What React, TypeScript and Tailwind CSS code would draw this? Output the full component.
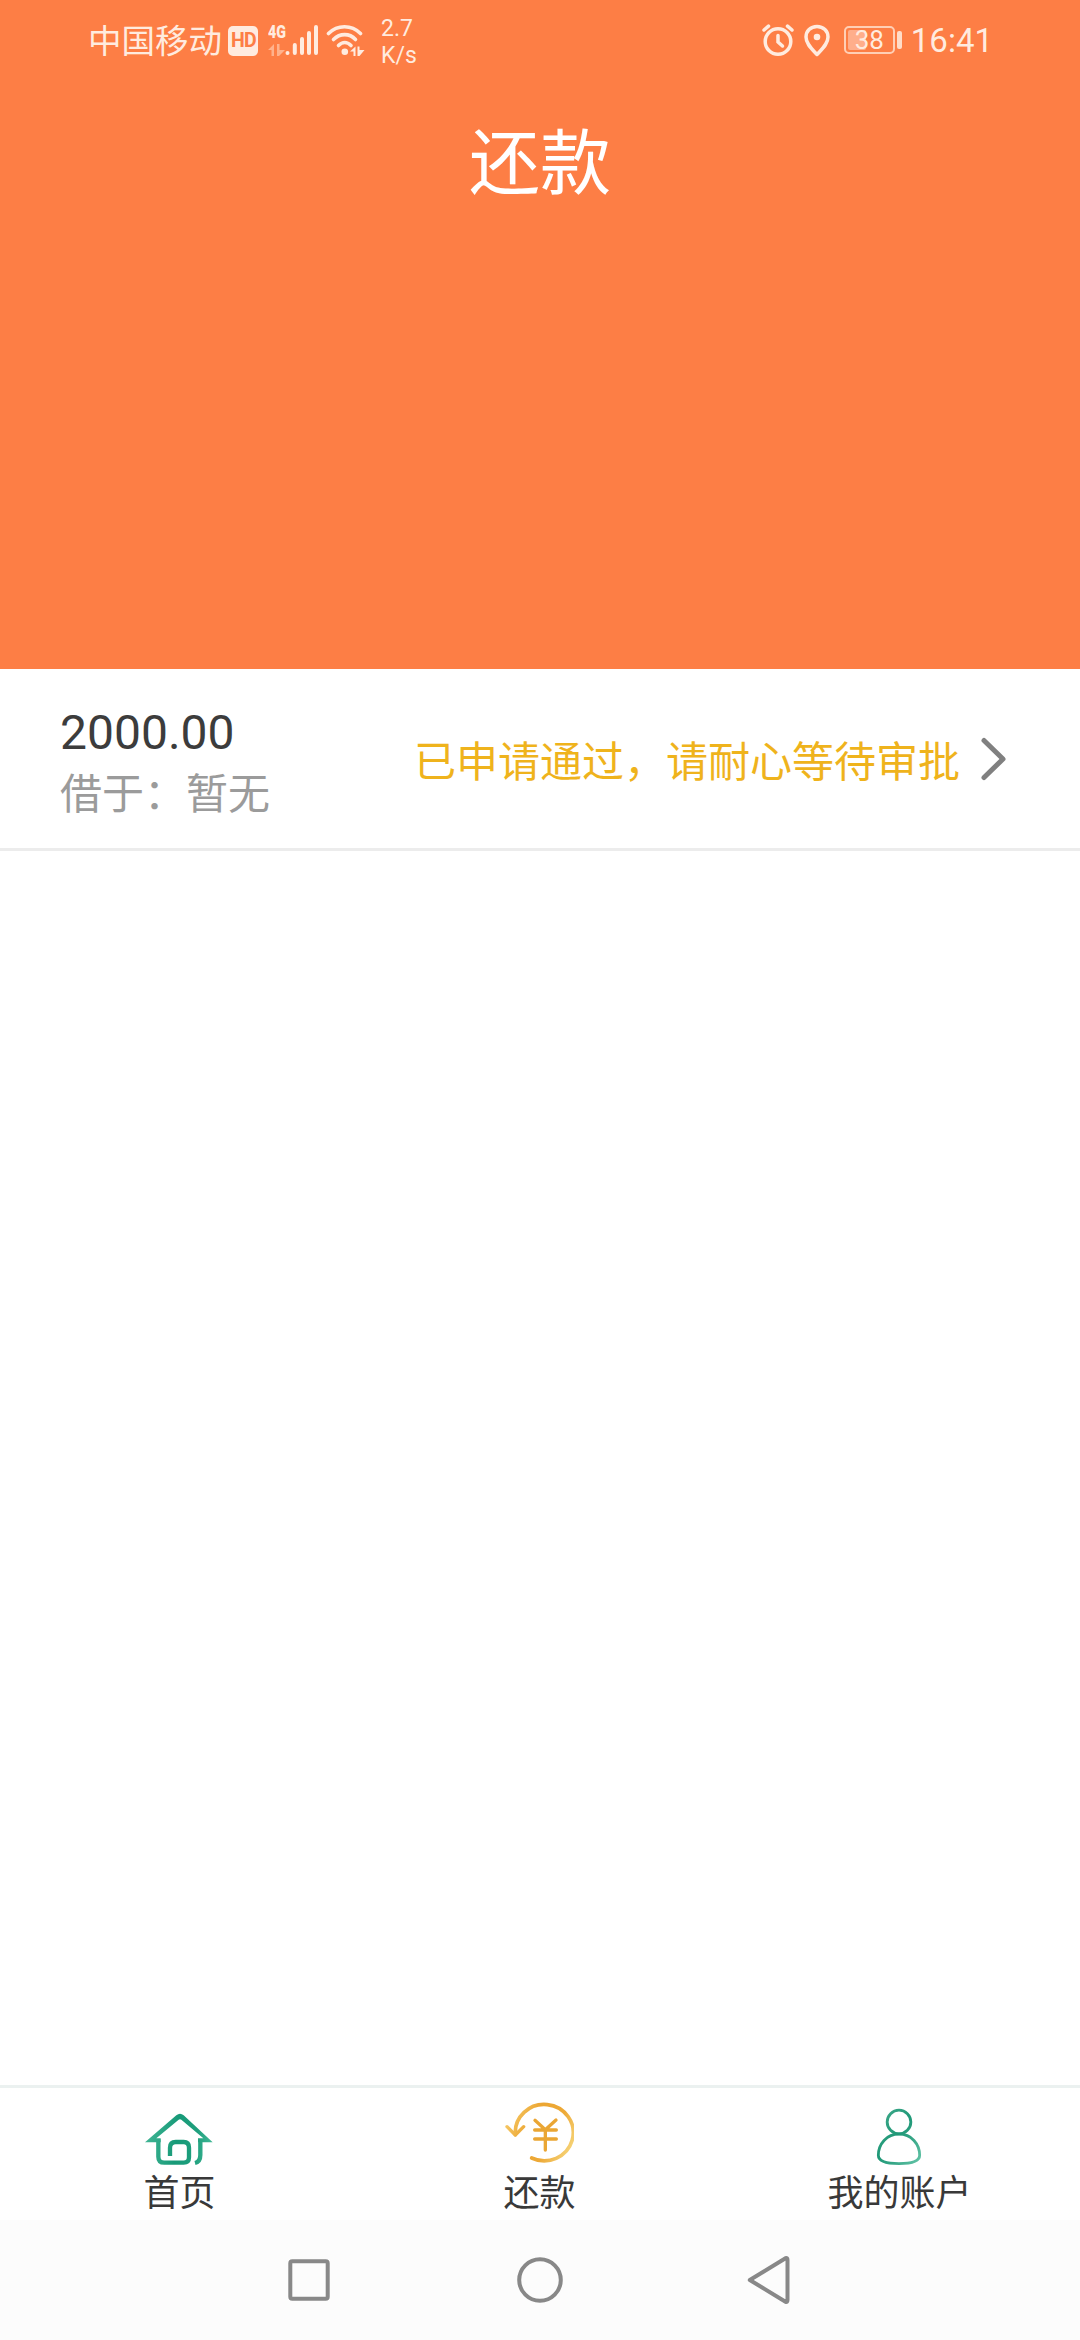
import React from 'react';

const StatusBar: React.FC = () => {
  return (
    <div className="flex h-[80px] items-start text-[#ffebdf]">
      <span className="ml-[88px] mt-[18px] w-[133px] whitespace-nowrap text-[33.5px] leading-[48px]">中国移动</span>
      <span className="ml-[7px] mt-[26px] flex h-[30px] w-[30px] items-center justify-center rounded-[5px] bg-[#ffebdf] pl-px text-[19.5px] font-bold leading-none tracking-[-0.8px] text-[#fd7e45]">
        HD
      </span>
      <div className="ml-[10px] mt-[24px] flex w-[17px] flex-col">
        <span className="origin-left scale-x-75 text-[19px] font-black leading-[15px]">4G</span>
        <svg className="mt-[5px]" width="17" height="12" viewBox="0 0 17 12" fill="#ffb28c">
          <path d="M0 6 6 0v12H3.500V6zM9 0h2.500v6H17l-6 6H9z" />
        </svg>
      </div>
      <svg className="mt-[24px]" width="34" height="32" viewBox="0 0 34 32" stroke="#ffebdf" strokeWidth="4" strokeLinecap="round">
        <path d="M2.500 29h.01M9.800 21v8M17 15v14M24 9v20M31 3v26" />
      </svg>
      <svg className="ml-[7px] mt-[24px]" width="40" height="32" viewBox="0 0 40 32" fill="none" stroke="#ffebdf" strokeLinecap="round">
        <path d="M2.500 9.500C11.500 .5 25.500 .5 34.500 9.500" strokeWidth="3.600" />
        <path d="M7.500 15.500C14 9 23.500 9 29.500 15.500" strokeWidth="3.600" />
        <path d="M12.500 21.500C16.500 17.500 21 17.500 25 21.500" strokeWidth="3.600" />
        <circle cx="18.800" cy="27.800" r="3.300" fill="#ffebdf" stroke="none" />
        <path d="M24 27.500 29.500 22.500v9.500h-2v-4.500zM31.500 22.500h2V26h5l-5 6h-2z" fill="#ffebdf" stroke="none" />
      </svg>
      <div className="ml-[15px] mt-[15px] flex flex-col text-[23px] leading-[27px]">
        <span>2.7</span>
        <span>K/s</span>
      </div>
      <svg className="ml-auto mt-[23px]" width="34" height="34" viewBox="0 0 34 34" fill="none" stroke="#ffebdf" strokeLinecap="round">
        <circle cx="17" cy="18.500" r="12.800" strokeWidth="3.500" />
        <path d="M17 12.500v6.500l4.500 4" strokeWidth="3.500" />
        <path d="M3 7 7.500 3.200M31 7l-4.500-3.800" strokeWidth="3.500" />
      </svg>
      <svg className="ml-[7px] mt-[24px]" width="32" height="33" viewBox="0 0 32 33" fill="none">
        <path d="M15 2.500c-6.500 0-11 4.800-11 10.500 0 7 6 12 11 17.500 5-5.500 11-10.500 11-17.500C26 7.300 21.500 2.500 15 2.500z" stroke="#ffebdf" strokeWidth="3.500" strokeLinejoin="round" />
        <circle cx="15" cy="13" r="3.300" fill="#ffebdf" />
      </svg>
      <div className="ml-[10px] mt-[26px] flex items-center">
        <div className="relative flex h-[28px] w-[51px] items-center justify-center rounded-[5px] border-2 border-[#ffcfb5]">
          <div className="absolute left-[2px] top-[2px] h-[20px] w-[18px] rounded-[2px] bg-[#ffae8b]" />
          <span className="relative text-[26px] leading-none">38</span>
        </div>
        <div className="ml-[2px] h-[18px] w-[5px] rounded-[2px] bg-[#ffdcc8]" />
      </div>
      <span className="ml-[9px] mr-[87px] mt-[21px] text-[33px] leading-[40px]">16:41</span>
    </div>
  );
};

const HomeIcon: React.FC = () => (
  <svg width="120" height="73" viewBox="0 81 360 219" fill="none">
    <defs>
      <linearGradient id="home" gradientUnits="userSpaceOnUse" x1="80" y1="200" x2="278" y2="220">
        <stop offset="0" stopColor="#3fb493" />
        <stop offset=".45" stopColor="#179a78" />
        <stop offset=".75" stopColor="#1f9f7d" />
        <stop offset="1" stopColor="#42b997" />
      </linearGradient>
    </defs>
    <path d="M75 217 169 136Q180 127 191 136L278 217H234V205H250L184 149Q180 146 176 149L109 205H122V217Z" fill="url(#home)" />
    <path
      d="M115 208V260Q115 278 133 278H191Q207 278 207 262V233Q207 216 191 216H167Q150 216 150 233V258M241 208V255Q241 275 225 279"
      stroke="url(#home)"
      strokeWidth="13"
    />
  </svg>
);

const RepayIcon: React.FC = () => (
  <svg width="120" height="73" viewBox="0 81 360 219" fill="none" strokeLinecap="round" strokeLinejoin="round">
    <defs>
      <linearGradient id="repay" gradientUnits="userSpaceOnUse" x1="75" y1="130" x2="290" y2="240">
        <stop offset="0" stopColor="#f7cf70" />
        <stop offset=".35" stopColor="#eca632" />
        <stop offset=".65" stopColor="#eda937" />
        <stop offset="1" stopColor="#f8dc84" />
      </linearGradient>
      <clipPath id="repayClip">
        <path d="M60 81H282V300H60z" />
      </clipPath>
    </defs>
    <g clipPath="url(#repayClip)">
      <path d="M106 194A87 84.500 0 1 1 155 264" stroke="url(#repay)" strokeWidth="11" />
    </g>
    <path d="M81 170 106 195 131 170" stroke="url(#repay)" strokeWidth="10" />
    <path d="M165 151 196 179 228 150M164 180H229M164 207H229M196 180V240" stroke="#eaa634" strokeWidth="10" />
  </svg>
);

const AccountIcon: React.FC = () => (
  <svg width="180" height="73" viewBox="0 81 540 219" fill="none">
    <defs>
      <linearGradient id="account" gradientUnits="userSpaceOnUse" x1="200" y1="160" x2="335" y2="270">
        <stop offset="0" stopColor="#3aa687" />
        <stop offset=".4" stopColor="#1f9877" />
        <stop offset=".65" stopColor="#37a687" />
        <stop offset="1" stopColor="#62c3a6" />
      </linearGradient>
    </defs>
    <circle cx="267" cy="156" r="35.500" stroke="url(#account)" strokeWidth="8.500" />
    <path
      d="M267 192C230 192 205 222 205 256C205 274 232 281 267 281S329 274 329 256C329 222 304 192 267 192Z"
      stroke="url(#account)"
      strokeWidth="8.500"
    />
  </svg>
);

const tabs = [
  { label: '首页', icon: <HomeIcon /> },
  { label: '还款', icon: <RepayIcon /> },
  { label: '我的账户', icon: <AccountIcon /> },
];

const App: React.FC = () => {
  return (
    <div className="flex h-[2340px] w-[1080px] flex-col overflow-hidden bg-white font-[Roboto,'Noto_Sans_CJK_SC',sans-serif]">
      <header className="h-[669px] bg-[#fd7e45]">
        <StatusBar />
        <h1 className="mt-[32px] text-center text-[71px] leading-[104px] text-white">还款</h1>
      </header>

      <main className="flex-1">
        <div className="flex h-[182px] items-center border-b-[3px] border-[#ececec] pl-[60px] pr-[72px]">
          <div className="flex flex-col pt-3">
            <span className="text-[48px] leading-[60px] text-[#3c3c3c]">2000.00</span>
            <span className="text-[42px] leading-[64px] text-[#9b9b9b]">借于：暂无</span>
          </div>
          <span className="ml-auto pt-[9px] text-[42px] leading-[60px] text-[#efb31c]">已申请通过，请耐心等待审批</span>
          <svg className="ml-[18px]" width="30" height="46" viewBox="0 0 30 46" fill="none" stroke="#808080" strokeWidth="5" strokeLinecap="round" strokeLinejoin="round">
            <path d="M6 4.500 25 23 6 41.500" />
          </svg>
        </div>
      </main>

      <nav className="grid h-[135px] grid-cols-3 border-t-[3px] border-[#ebf1f0]">
        {tabs.map((tab) => (
          <div key={tab.label} className="flex flex-col items-center pt-[9px]">
            {tab.icon}
            <span className="mt-0.5 mr-px text-[36px] leading-[44px] text-[#393939]">{tab.label}</span>
          </div>
        ))}
      </nav>

      <div className="flex h-[120px] items-center justify-center gap-[183px] bg-[#fcfcfc]">
        <svg width="48" height="48" viewBox="0 0 48 48" fill="none" stroke="#888" strokeWidth="4">
          <rect x="5.300" y="5.300" width="37.400" height="37.400" rx="2" />
        </svg>
        <svg width="48" height="48" viewBox="0 0 48 48" fill="none" stroke="#888" strokeWidth="4">
          <circle cx="24" cy="24" r="20.800" />
        </svg>
        <svg width="48" height="48" viewBox="0 0 48 48" fill="none" stroke="#888" strokeWidth="4" strokeLinejoin="round">
          <path d="M2.800 24 38.500 2.200Q40.500 1.500 40.500 4V44Q40.500 46.500 38.500 45.800Z" />
        </svg>
      </div>
    </div>
  );
};

export default App;
